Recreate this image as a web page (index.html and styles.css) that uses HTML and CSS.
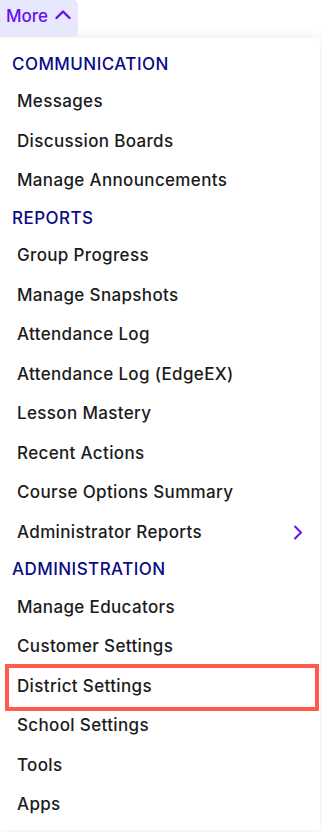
FILE: index.html
```html
<!DOCTYPE html>
<html lang="en">
<head>
<meta charset="utf-8">
<title>More menu</title>
<link rel="stylesheet" href="styles.css">
</head>
<body>
<div class="bar">
  <button class="more-btn" type="button">
    <span>More</span>
    <svg class="chev-up" width="16" height="11" viewBox="0 0 16 11" aria-hidden="true">
      <path d="M1.5 9 L8 2.5 L14.5 9" fill="none" stroke="currentColor" stroke-width="2.4" stroke-linecap="round" stroke-linejoin="round"/>
    </svg>
  </button>
</div>
<nav class="menu">
  <div class="heading">COMMUNICATION</div>
  <a class="item">Messages</a>
  <a class="item">Discussion Boards</a>
  <a class="item">Manage Announcements</a>
  <div class="heading">REPORTS</div>
  <a class="item">Group Progress</a>
  <a class="item">Manage Snapshots</a>
  <a class="item">Attendance Log</a>
  <a class="item">Attendance Log (EdgeEX)</a>
  <a class="item">Lesson Mastery</a>
  <a class="item">Recent Actions</a>
  <a class="item">Course Options Summary</a>
  <a class="item has-sub">
    <span>Administrator Reports</span>
    <svg class="chev-right" width="16" height="16" viewBox="0 0 16 16" aria-hidden="true">
      <path d="M6 2.5 L12 8.5 L6 14.5" fill="none" stroke="currentColor" stroke-width="2" stroke-linecap="round" stroke-linejoin="round"/>
    </svg>
  </a>
  <div class="heading">ADMINISTRATION</div>
  <a class="item">Manage Educators</a>
  <a class="item">Customer Settings</a>
  <a class="item highlight">District Settings<span class="ring"></span></a>
  <a class="item">School Settings</a>
  <a class="item">Tools</a>
  <a class="item">Apps</a>
</nav>
</body>
</html>
```

FILE: styles.css
```css
* { box-sizing: border-box; }

html, body {
  margin: 0;
  padding: 0;
  background: #ffffff;
}

body {
  font-family: Inter, "Noto Sans", "Liberation Sans", sans-serif;
  width: 322px;
  height: 832px;
  overflow: hidden;
}

.bar {
  height: 38px;
  position: relative;
  z-index: 2;
}

.more-btn {
  display: flex;
  align-items: flex-start;
  gap: 7px;
  width: 78px;
  height: 37px;
  margin: 0;
  padding: 5px 0 0 6px;
  border: 0;
  border-radius: 0 5px 5px 0;
  background: #e7e8fc;
  color: #6610f2;
  font-family: inherit;
  font-size: 17px;
  font-weight: 500;
  line-height: 22px;
  cursor: pointer;
}

.chev-up {
  margin-top: 4px;
  display: block;
}

.menu {
  width: 320px;
  height: 792px;
  background: #ffffff;
  border-radius: 0 4px 4px 0;
  box-shadow: 0 0 14px rgba(0, 0, 0, 0.09);
  padding-top: 8px;
  display: flex;
  flex-direction: column;
}

.heading {
  height: 35.5px;
  padding-left: 12px;
  display: flex;
  align-items: center;
  color: #0b0b86;
  font-size: 17px;
  font-weight: 500;
  line-height: 24px;
  letter-spacing: 0.45px;
}

.item {
  position: relative;
  height: 39.5px;
  padding: 0 17px;
  display: flex;
  align-items: center;
  justify-content: space-between;
  color: #1b1b20;
  font-size: 17px;
  font-weight: 500;
  line-height: 24px;
  letter-spacing: 0.35px;
  text-decoration: none;
}

.chev-right {
  color: #6610f2;
  display: block;
  margin-right: -2px;
}

.ring {
  position: absolute;
  top: -2px;
  bottom: -5px;
  left: 5px;
  right: 1px;
  border: 4px solid #ff5a4b;
  pointer-events: none;
}
```
